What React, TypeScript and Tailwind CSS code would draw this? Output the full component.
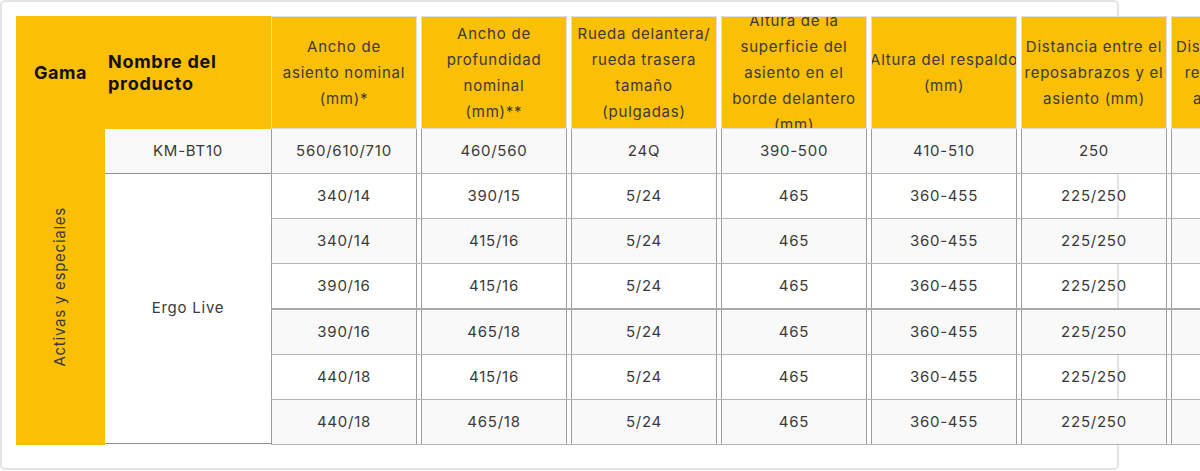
const headers: string[][] = [
  ["Ancho de", "asiento nominal", "(mm)*"],
  ["Ancho de", "profundidad", "nominal", "(mm)**"],
  ["Rueda delantera/", "rueda trasera", "tamaño", "(pulgadas)"],
  ["Altura de la", "superficie del", "asiento en el", "borde delantero", "(mm)"],
  ["Altura del respaldo", "(mm)"],
  ["Distancia entre el", "reposabrazos y el", "asiento (mm)"],
  ["Distancia entre el", "reposapiés y el", "asiento (mm)"],
];

const rows: string[][] = [
  ["560/610/710", "460/560", "24Q", "390-500", "410-510", "250", "60"],
  ["340/14", "390/15", "5/24", "465", "360-455", "225/250", "60"],
  ["340/14", "415/16", "5/24", "465", "360-455", "225/250", "60"],
  ["390/16", "415/16", "5/24", "465", "360-455", "225/250", "60"],
  ["390/16", "465/18", "5/24", "465", "360-455", "225/250", "60"],
  ["440/18", "415/16", "5/24", "465", "360-455", "225/250", "60"],
  ["440/18", "465/18", "5/24", "465", "360-455", "225/250", "60"],
];

export default function App() {
  return (
    <div className="w-[1200px] h-[471px] overflow-hidden bg-white font-['Inter','Open_Sans',sans-serif] text-[#3a3a3a]">
      <div className="w-[1119px] h-[470px] rounded-[5px] border-2 border-[#e4e4e4] px-[14px] pt-[14px]">
        <div className="flex w-max">
          {/* Gama column */}
          <div className="flex w-[89px] flex-col bg-[#fbbf05]">
            <div className="flex h-[113px] items-center justify-center text-[18px] font-bold tracking-[0.03em] text-[#111]">
              Gama
            </div>
            <div className="flex h-[316px] items-center justify-center">
              <span className="rotate-180 text-[15px] tracking-[0.05em] [writing-mode:vertical-rl]">
                Activas y especiales
              </span>
            </div>
          </div>

          <div className="flex flex-col">
            {/* header row */}
            <div className="flex h-[113px]">
              <div className="flex w-[166px] items-center bg-[#fbbf05] pl-[3px] text-[18px] font-bold leading-[22px] tracking-[0.04em] text-[#111]">
                Nombre del
                <br />
                producto
              </div>
              {headers.map((lines, i) => (
                <div
                  key={i}
                  className="mr-[4px] flex w-[146px] items-center justify-center overflow-hidden border border-[#dedede] bg-[#fbbf05] text-center text-[15px] leading-[26px] tracking-[0.05em]"
                >
                  <div className="whitespace-nowrap">
                    {lines.map((l, j) => (
                      <div key={j}>{l}</div>
                    ))}
                  </div>
                </div>
              ))}
            </div>

            {/* body */}
            <div className="flex">
              <div className="flex w-[166px] flex-col text-[15px] tracking-[0.05em]">
                <div className="flex h-[45px] items-center justify-center border-b border-[#8f8f8f] bg-[#f9f9f9]">
                  KM-BT10
                </div>
                <div className="flex h-[270px] items-center justify-center border-b border-[#8f8f8f]">
                  Ergo Live
                </div>
              </div>
              <div className="flex flex-col">
                {rows.map((row, r) => (
                  <div
                    key={r}
                    className={
                      r === 3
                        ? "flex h-[46px] border-b-2 border-[#a8a8a8]"
                        : "flex h-[45px] border-b border-[#b4b4b4]"
                    }
                  >
                    {row.map((v, c) => (
                      <div
                        key={c}
                        className={
                          r % 2 === 0
                            ? "mr-[4px] flex w-[146px] items-center justify-center border-x border-[#9c9c9c] bg-[#f9f9f9] text-[15px] tracking-[0.05em]"
                            : "mr-[4px] flex w-[146px] items-center justify-center border-x border-[#9c9c9c] text-[15px] tracking-[0.05em]"
                        }
                      >
                        {v}
                      </div>
                    ))}
                  </div>
                ))}
              </div>
            </div>
          </div>
        </div>
      </div>
    </div>
  );
}
